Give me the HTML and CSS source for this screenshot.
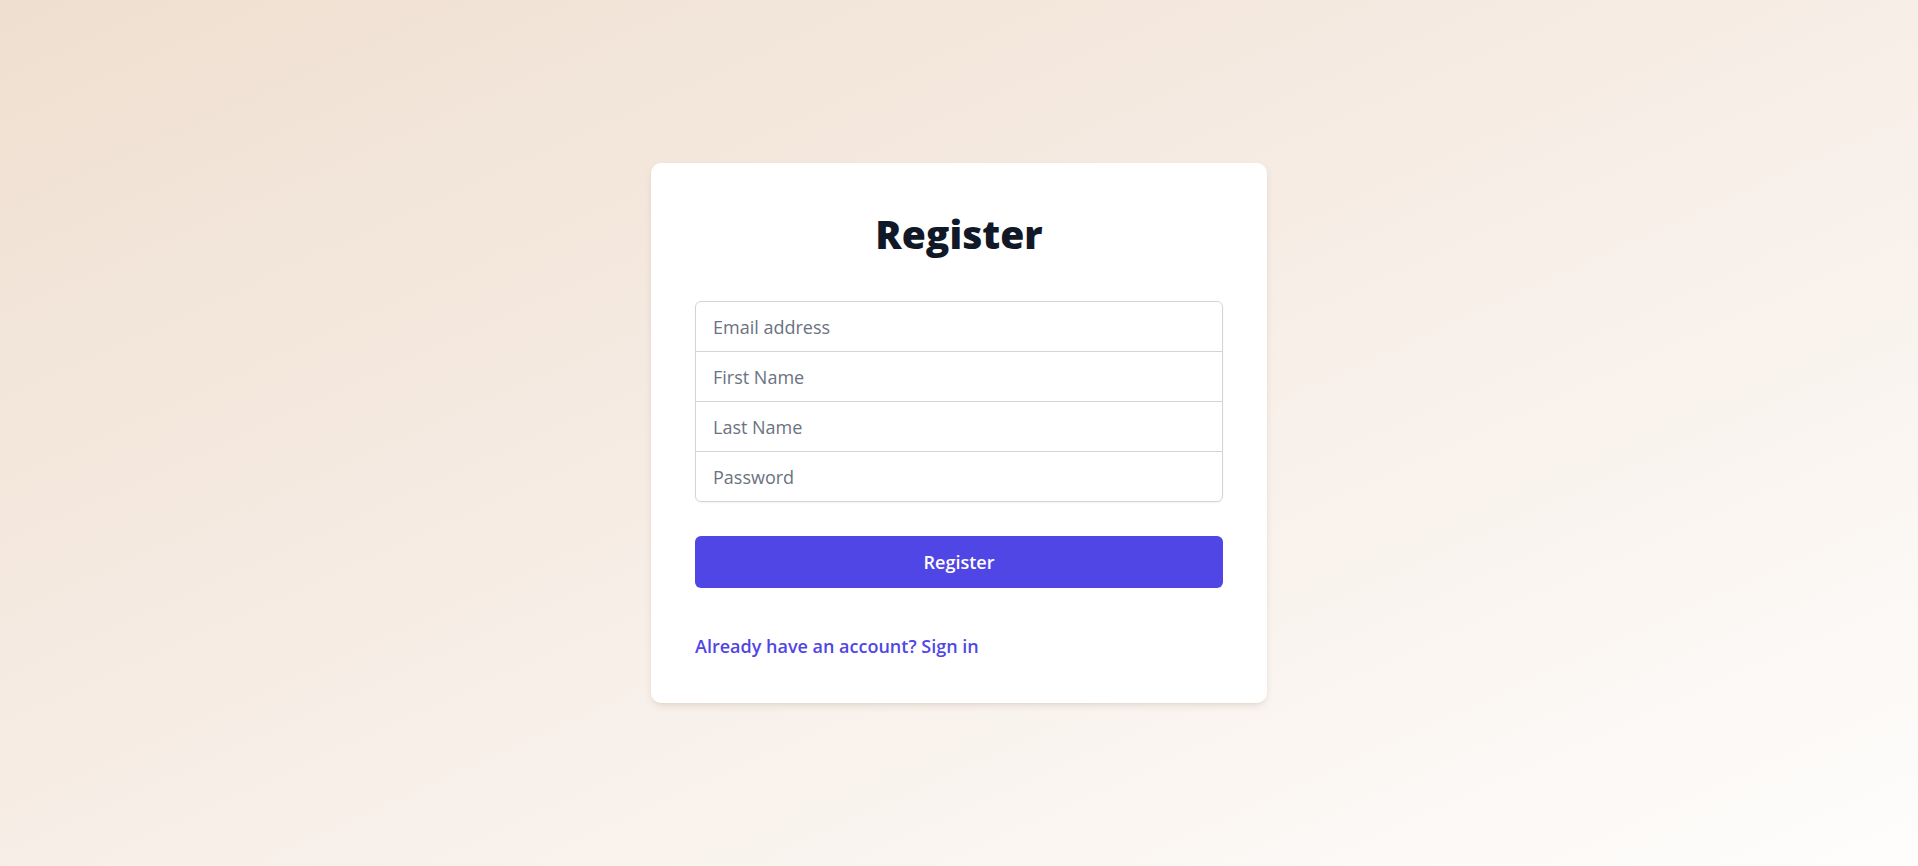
FILE: index.html
```html
<!DOCTYPE html>
<html lang="en">
<head>
<meta charset="utf-8">
<title>Register</title>
<link rel="stylesheet" href="styles.css">
</head>
<body>
<main class="page">
  <section class="card">
    <h2 class="title">Register</h2>
    <form class="form">
      <div class="fields">
        <input class="field" type="email" placeholder="Email address">
        <input class="field" type="text" placeholder="First Name">
        <input class="field" type="text" placeholder="Last Name">
        <input class="field" type="password" placeholder="Password">
      </div>
      <button class="submit" type="button">Register</button>
    </form>
    <a class="signin" href="#">Already have an account? Sign in</a>
  </section>
</main>
</body>
</html>
```

FILE: styles.css
```css
* { box-sizing: border-box; }

html, body {
  margin: 0;
  height: 100%;
}

body {
  font-family: "Open Sans", "Noto Sans", sans-serif;
  background: linear-gradient(to bottom right, #efdfd0 0%, #f6ece4 45%, #fefdfc 100%);
}

.page {
  min-height: 100vh;
  display: flex;
  align-items: center;
  justify-content: center;
}

.card {
  width: 616px;
  background: #ffffff;
  border-radius: 10px;
  padding: 47px 44px 45px;
  box-shadow: 0 4px 10px -2px rgba(80, 50, 20, 0.12), 0 2px 4px -2px rgba(80, 50, 20, 0.08);
}

.title {
  margin: 0;
  text-align: center;
  font-size: 39px;
  line-height: 48px;
  font-weight: 800;
  color: #111827;
}

.form {
  margin-top: 43px;
  display: flex;
  flex-direction: column;
}

.fields {
  display: flex;
  flex-direction: column;
  border-radius: 6px;
  box-shadow: 0 1px 2px rgba(0, 0, 0, 0.05);
}

.field {
  display: block;
  width: 100%;
  height: 51px;
  margin: 0;
  padding: 0 17px;
  border: 1px solid #d1d5db;
  background: #ffffff;
  font-family: inherit;
  font-size: 18px;
  color: #111827;
  outline: none;
}

.field + .field { margin-top: -1px; }

.field:first-child { border-radius: 6px 6px 0 0; }
.field:last-child { border-radius: 0 0 6px 6px; }

.field::placeholder { color: #6b7280; }

.submit {
  margin-top: 34px;
  height: 52px;
  width: 100%;
  border: none;
  border-radius: 6px;
  background: #4f46e5;
  color: #ffffff;
  font-family: inherit;
  font-size: 18px;
  font-weight: 600;
  cursor: pointer;
}

.signin {
  display: block;
  margin-top: 46px;
  font-size: 18px;
  line-height: 24px;
  font-weight: 600;
  color: #4f46e5;
  text-decoration: none;
}
```
